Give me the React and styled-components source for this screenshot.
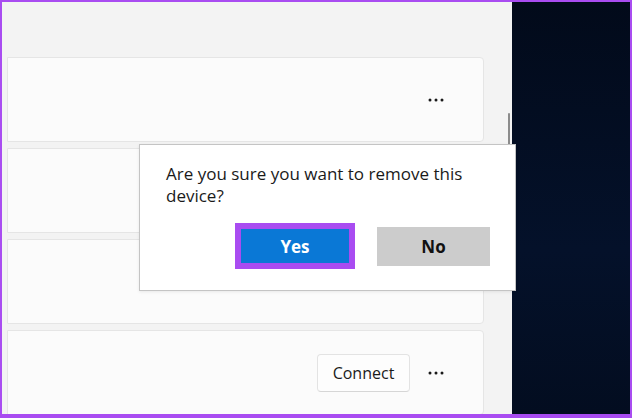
import React from 'react';
import styled, { createGlobalStyle } from 'styled-components';

const GlobalStyle = createGlobalStyle`
	html, body {
		margin: 0;
		padding: 0;
		background: #ffffff;
	}
	* {
		box-sizing: border-box;
	}
`

const Frame = styled.div`
	position: relative;
	width: 632px;
	height: 418px;
	display: flex;
	border: 2px solid #a94cf1;
	border-bottom-width: 4px;
	font-family: "Open Sans", "Noto Sans", sans-serif;
	overflow: hidden;
`

const Settings = styled.div`
	position: relative;
	width: 510px;
	height: 100%;
	background: #f3f3f3;
	padding: 55px 28px 0 5px;
	display: flex;
	flex-direction: column;
	gap: 6px;
`

const Card = styled.div`
	height: 85px;
	flex-shrink: 0;
	background: #fbfbfb;
	border: 1px solid #e5e5e5;
	border-radius: 0 4px 4px 0;
	display: flex;
	align-items: center;
	justify-content: flex-end;
	gap: 18px;
	padding-right: 39px;
`

const ConnectButton = styled.button`
	width: 93px;
	height: 38px;
	background: #fdfdfd;
	border: 1px solid #e3e3e3;
	border-bottom-color: #d6d6d6;
	border-radius: 4px;
	font-family: inherit;
	font-size: 16px;
	color: #1b1b1b;
	padding: 0;
`

const Scrollbar = styled.div`
	position: absolute;
	left: 506px;
	top: 111px;
	width: 2px;
	height: 40px;
	border-radius: 1px;
	background: #8b8b8b;
`

const Backdrop = styled.div`
	flex: 1;
	height: 100%;
	background: linear-gradient(180deg, #020a1a 0%, #04112a 60%, #030d20 100%);
`

const Dialog = styled.div`
	position: absolute;
	left: 137px;
	top: 142px;
	width: 377px;
	height: 147px;
	background: #ffffff;
	border: 1px solid #c4c4c4;
	box-shadow: 0 1px 3px rgba(0, 0, 0, 0.08);
	padding: 18px 25px 0 26px;
	z-index: 2;
`

const Message = styled.p`
	margin: 0;
	max-width: 320px;
	font-size: 17px;
	line-height: 22px;
	color: #1a1a1a;
`

const Actions = styled.div`
	display: flex;
	justify-content: flex-end;
	align-items: center;
	gap: 22px;
	margin-top: 16px;
`

const ActionButton = styled.button`
	width: ${p => (p.$primary ? '120px' : '113px')};
	height: ${p => (p.$primary ? '46px' : '39px')};
	padding: 0;
	border: ${p => (p.$primary ? '6px solid #a94cf1' : 'none')};
	background: ${p => (p.$primary ? '#0a78d6' : '#cccccc')};
	color: ${p => (p.$primary ? '#ffffff' : '#111111')};
	font-family: inherit;
	font-size: 17px;
	font-weight: 700;
`

const Dots = () => (
	<svg width="16" height="4" viewBox="0 0 16 4">
		<circle cx="2" cy="2" r="1.5" fill="#1a1a1a" />
		<circle cx="8" cy="2" r="1.5" fill="#1a1a1a" />
		<circle cx="14" cy="2" r="1.5" fill="#1a1a1a" />
	</svg>
)

const App = () => {
	return (
		<>
			<GlobalStyle />
			<Frame>
				<Settings>
					<Card>
						<Dots />
					</Card>
					<Card />
					<Card />
					<Card>
						<ConnectButton>Connect</ConnectButton>
						<Dots />
					</Card>
					<Scrollbar />
				</Settings>
				<Backdrop />
				<Dialog>
					<Message>Are you sure you want to remove this device?</Message>
					<Actions>
						<ActionButton $primary>Yes</ActionButton>
						<ActionButton>No</ActionButton>
					</Actions>
				</Dialog>
			</Frame>
		</>
	);
}

export default App;
